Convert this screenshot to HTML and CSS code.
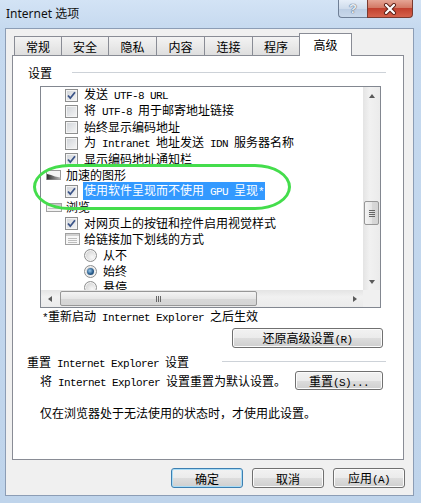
FILE: index.html
```html
<!DOCTYPE html>
<html>
<head>
    <meta charset="utf-8">
    <title>Internet 选项</title>
    <link rel="stylesheet" href="styles.css">
</head>
<body>
<div id="window">
    <div class="titlebar">
        <span class="title">Internet 选项</span>
        <div class="caption">
            <span class="cap-btn help">?</span>
            <span class="cap-btn close">
                <svg width="14" height="12" viewBox="0 0 14 12">
                    <path d="M3 2 L11 10 M11 2 L3 10" stroke="#5b1f16" stroke-width="4" stroke-linecap="round"/>
                    <path d="M3 2 L11 10 M11 2 L3 10" stroke="#fff" stroke-width="2.2" stroke-linecap="round"/>
                </svg>
            </span>
        </div>
    </div>

    <div class="client">
        <div class="tabs">
            <span class="tab">常规</span>
            <span class="tab">安全</span>
            <span class="tab w49">隐私</span>
            <span class="tab w49">内容</span>
            <span class="tab w49">连接</span>
            <span class="tab">程序</span>
            <span class="tab active">高级</span>
        </div>

        <div class="panel">
            <div class="group-title">
                <span>设置</span><i class="rule"></i>
            </div>

            <div class="listbox">
                <div class="list-view">
                    <div class="list-items">
                        <div class="row lv1"><span class="check on"><svg width="11" height="11"><path d="M2 5.5 L4.3 8.2 L9 2.3" fill="none" stroke="#3b5488" stroke-width="1.8"/></svg></span><span>发送<span class="en"> UTF-8 URL</span></span></div>
                        <div class="row lv1"><span class="check"></span><span>将<span class="en"> UTF-8 </span>用于邮寄地址链接</span></div>
                        <div class="row lv1"><span class="check"></span><span>始终显示编码地址</span></div>
                        <div class="row lv1"><span class="check"></span><span>为<span class="en"> Intranet </span>地址发送<span class="en"> IDN </span>服务器名称</span></div>
                        <div class="row lv1"><span class="check on"><svg width="11" height="11"><path d="M2 5.5 L4.3 8.2 L9 2.3" fill="none" stroke="#3b5488" stroke-width="1.8"/></svg></span><span>显示编码地址通知栏</span></div>
                        <div class="row lv0">
                            <svg class="cat-icon" width="16" height="11" viewBox="0 0 16 11">
                                <defs>
                                    <linearGradient id="gfx" x1="0" x2="1" y1="0" y2="0">
                                        <stop offset="0" stop-color="#2f2f2f"/>
                                        <stop offset="1" stop-color="#b9b9b9"/>
                                    </linearGradient>
                                </defs>
                                <rect x="0.5" y="0.5" width="14" height="9" fill="#f4f4f4" stroke="#9a9a9a"/>
                                <path d="M1 9.5 L1 4 L5 5 L9 6.5 L14.5 7.5 L14.5 9.5 Z" fill="url(#gfx)"/>
                            </svg>
                            <span>加速的图形</span>
                        </div>
                        <div class="row lv1"><span class="check on"><svg width="11" height="11"><path d="M2 5.5 L4.3 8.2 L9 2.3" fill="none" stroke="#3b5488" stroke-width="1.8"/></svg></span><span class="selected">使用软件呈现而不使用<span class="en"> GPU </span>呈现<span class="en">*</span></span></div>
                        <div class="row lv0">
                            <svg class="cat-icon" width="16" height="11" viewBox="0 0 16 11">
                                <rect x="0.5" y="1.5" width="15" height="8" fill="#f2f2f2" stroke="#a3a3a3"/>
                                <rect x="1" y="2" width="14" height="2" fill="#c9c9c9"/>
                                <path d="M2 6.5 H14" stroke="#c4c4c4"/>
                            </svg>
                            <span>浏览</span>
                        </div>
                        <div class="row lv1"><span class="check on"><svg width="11" height="11"><path d="M2 5.5 L4.3 8.2 L9 2.3" fill="none" stroke="#3b5488" stroke-width="1.8"/></svg></span><span>对网页上的按钮和控件启用视觉样式</span></div>
                        <div class="row lv1">
                            <svg class="opt-icon" width="15" height="12" viewBox="0 0 15 12">
                                <rect x="0.5" y="0.5" width="14" height="11" fill="#f7f7f7" stroke="#a0a0a0"/>
                                <rect x="1" y="1" width="13" height="2" fill="#d0d0d0"/>
                                <path d="M3 5.5 H12 M3 7.5 H12 M3 9.5 H12" stroke="#bdbdbd"/>
                            </svg>
                            <span>给链接加下划线的方式</span>
                        </div>
                        <div class="row lv2"><span class="radio"></span><span>从不</span></div>
                        <div class="row lv2"><span class="radio on"></span><span>始终</span></div>
                        <div class="row lv2"><span class="radio"></span><span>悬停</span></div>
                    </div>
                    <div class="vscroll">
                        <span class="sb-btn"><i class="arrow up"></i></span>
                        <div class="sb-track">
                            <span class="thumb-v"><i></i><i></i><i></i><i></i></span>
                        </div>
                        <span class="sb-btn"><i class="arrow down"></i></span>
                    </div>
                </div>
                <div class="hscroll">
                    <span class="sb-btn"><i class="arrow left"></i></span>
                    <div class="sb-track">
                        <span class="thumb-h"><i></i><i></i><i></i></span>
                    </div>
                    <span class="sb-btn"><i class="arrow right"></i></span>
                    <span class="corner"></span>
                </div>
            </div>

            <p class="note"><span class="en">*</span>重新启动<span class="en"> Internet Explorer </span>之后生效</p>
            <div class="restore-row">
                <button class="btn restore">还原高级设置<span class="en">(R)</span></button>
            </div>

            <div class="group-title second">
                <span>重置<span class="en"> Internet Explorer </span>设置</span><i class="rule"></i>
            </div>
            <div class="reset-row">
                <span>将<span class="en"> Internet Explorer </span>设置重置为默认设置。</span>
                <button class="btn reset">重置<span class="en">(S)...</span></button>
            </div>
            <p class="hint">仅在浏览器处于无法使用的状态时，才使用此设置。</p>

            <div class="mark"></div>
        </div>

        <div class="dialog-buttons">
            <button class="btn default">确定</button>
            <button class="btn">取消</button>
            <button class="btn">应用<span class="en">(A)</span></button>
        </div>
    </div>
</div>
</body>
</html>
```

FILE: styles.css
```css
body {
    margin: 0;
    font-family: "Noto Sans CJK SC", sans-serif;
    font-size: 12px;
    color: #000;
    background-color: #c2d6ed;
}

#window {
    width: 421px;
    height: 503px;
    display: flex;
    flex-direction: column;
    background: linear-gradient(#d3e3f5, #c5d9ef 30px, #bfd4eb);
    overflow: hidden;
}

/* title bar */

.titlebar {
    height: 28px;
    display: flex;
    align-items: flex-start;
    padding-left: 6px;
}

.title {
    line-height: 28px;
    font-family: "Noto Sans", "Noto Sans CJK SC", sans-serif;
    font-size: 12px;
    color: #111;
}

.caption {
    margin-left: auto;
    margin-right: 8px;
    display: flex;
}

.cap-btn {
    height: 18px;
    box-sizing: border-box;
    display: flex;
    align-items: center;
    justify-content: center;
    border: 1px solid #6f7f96;
    border-top: none;
}

.help {
    width: 29px;
    border-right: none;
    border-radius: 0 0 0 4px;
    background: linear-gradient(#e6eef8, #cfdcec 50%, #bccde3 51%, #c9d8ea);
    font-family: "Liberation Sans", sans-serif;
    font-size: 13px;
    font-weight: bold;
    color: #e9eef5;
    text-shadow: 0 0 1px #4b5a70, 0 0 1px #4b5a70;
}

.close {
    width: 46px;
    border-color: #7a3a30;
    border-radius: 0 0 4px 0;
    background: linear-gradient(#e5a595, #d37a66 45%, #c2412f 50%, #d5624c);
}

/* dialog face */

.client {
    flex: 1;
    margin: 0 7px 7px 5px;
    border: 1px solid #8c9db5;
    background-color: #f0f0f0;
    display: flex;
    flex-direction: column;
}

.tabs {
    display: flex;
    align-items: flex-end;
    height: 22px;
    margin-top: 4px;
    padding-left: 8px;
}

.tab {
    box-sizing: border-box;
    width: 48px;
    height: 19px;
    margin-right: -1px;
    border: 1px solid #898c95;
    border-bottom: none;
    background: linear-gradient(#f3f3f3, #e9e9e9 50%, #dedede);
    text-align: center;
    line-height: 20px;
}

.tab.w49 {
    width: 49px;
}

.tab.active {
    position: relative;
    z-index: 1;
    width: 53px;
    height: 23px;
    margin-bottom: -1px;
    background: #fff;
    line-height: 22px;
}

.panel {
    position: relative;
    box-sizing: border-box;
    height: 405px;
    margin: 0 9px 0 6px;
    padding-top: 8px;
    border: 1px solid #898c95;
    background-color: #fff;
}

.group-title {
    display: flex;
    align-items: center;
    height: 16px;
    padding: 0 17px 0 15px;
}

.group-title .rule {
    flex: 1;
    margin-left: 20px;
    border-top: 1px solid #cdd2d8;
}

.group-title.second {
    margin-top: 5px;
    padding-left: 14px;
}

.group-title.second .rule {
    margin-left: 33px;
}

.en {
    font-family: "Liberation Mono", monospace;
    font-size: 11px;
    letter-spacing: -0.6px;
}

/* settings tree */

.listbox {
    width: 341px;
    margin: 6px 0 0 27px;
    border: 1px solid #828790;
    box-sizing: border-box;
}

.list-view {
    display: flex;
    height: 203px;
}

.list-items {
    flex: 1;
    overflow: hidden;
}

.row {
    display: flex;
    align-items: center;
    height: 16px;
    line-height: 16px;
    white-space: nowrap;
}

.row.lv0 {
    padding-left: 5px;
}

.row.lv1 {
    padding-left: 24px;
}

.row.lv2 {
    padding-left: 43px;
}

.cat-icon {
    margin-right: 4px;
}

.opt-icon {
    margin-right: 4px;
}

.check {
    box-sizing: border-box;
    width: 13px;
    height: 13px;
    margin-right: 6px;
    border: 1px solid #8e8f8f;
    background: linear-gradient(135deg, #cfd3d8, #f6f6f6);
    box-shadow: inset 0 0 0 1px #f4f4f4;
    display: flex;
}

.radio {
    box-sizing: border-box;
    width: 13px;
    height: 13px;
    margin-right: 6px;
    border: 1px solid #8e8f8f;
    border-radius: 50%;
    background: radial-gradient(circle at 65% 65%, #f8f8f8, #d6d6d6 70%);
    box-shadow: inset 0 0 0 1px #f5f5f5;
    display: flex;
    align-items: center;
    justify-content: center;
}

.radio.on::after {
    content: "";
    width: 7px;
    height: 7px;
    border-radius: 50%;
    background: radial-gradient(circle at 40% 40%, #9ccbee, #2a5d8c 55%, #16395c);
}

.selected {
    background-color: #3399ff;
    color: #fff;
    padding: 0 1px;
    line-height: 15px;
    margin-left: -1px;
}

/* scroll bars */

.vscroll {
    width: 17px;
    display: flex;
    flex-direction: column;
    background: linear-gradient(90deg, #e4e4e4, #f1f1f1 40%, #ebebeb);
}

.hscroll {
    height: 17px;
    display: flex;
    background: linear-gradient(#e4e4e4, #f1f1f1 40%, #ebebeb);
}

.sb-btn {
    width: 17px;
    height: 17px;
    display: flex;
    align-items: center;
    justify-content: center;
}

.sb-track {
    flex: 1;
    display: flex;
}

.vscroll .sb-track {
    flex-direction: column;
}

.arrow {
    width: 0;
    height: 0;
    border: 3px solid transparent;
}

.arrow.up {
    border-bottom: 4px solid #5a5a5a;
    border-top: none;
}

.arrow.down {
    border-top: 4px solid #5a5a5a;
    border-bottom: none;
}

.arrow.left {
    border-right: 4px solid #5a5a5a;
    border-left: none;
}

.arrow.right {
    border-left: 4px solid #5a5a5a;
    border-right: none;
}

.thumb-v {
    box-sizing: border-box;
    width: 15px;
    height: 24px;
    margin: 97px 0 0 1px;
    border: 1px solid #979797;
    border-radius: 2px;
    background: linear-gradient(90deg, #f4f4f4, #e6e6e6 50%, #d8d8d8 51%, #d4d4d4);
    display: flex;
    flex-direction: column;
    align-items: center;
    justify-content: center;
    gap: 1px;
}

.thumb-v i {
    width: 6px;
    height: 1px;
    background-color: #666;
}

.thumb-h {
    box-sizing: border-box;
    width: 197px;
    height: 15px;
    margin: 1px 0 0 2px;
    border: 1px solid #979797;
    border-radius: 2px;
    background: linear-gradient(#f4f4f4, #e6e6e6 50%, #d8d8d8 51%, #d4d4d4);
    display: flex;
    align-items: center;
    justify-content: center;
    gap: 1px;
}

.thumb-h i {
    width: 1px;
    height: 6px;
    background-color: #666;
}

.corner {
    width: 17px;
    background-color: #f0f0f0;
}

/* lower part of the page */

.note {
    margin: 0 0 0 29px;
    line-height: 16px;
}

.restore-row {
    display: flex;
    justify-content: flex-end;
    padding-right: 20px;
    margin-top: 2px;
}

.btn {
    box-sizing: border-box;
    height: 20px;
    padding: 0;
    border: 1px solid #707070;
    border-radius: 3px;
    background: linear-gradient(#f2f2f2, #ebebeb 50%, #dddddd 51%, #cfcfcf);
    box-shadow: inset 0 0 0 1px #fbfbfb;
    font-family: "Noto Sans CJK SC", sans-serif;
    font-size: 12px;
    line-height: 17px;
    color: #000;
}

.btn.restore {
    width: 151px;
}

.reset-row {
    display: flex;
    align-items: center;
    justify-content: space-between;
    height: 20px;
    margin-top: 1px;
    padding: 0 20px 0 27px;
}

.btn.reset {
    width: 88px;
    height: 19px;
}

.hint {
    margin: 15px 0 0 27px;
    line-height: 16px;
}

/* green hand-drawn marker around the graphics option */
.mark {
    position: absolute;
    left: 20px;
    top: 108px;
    width: 258px;
    height: 46px;
    box-sizing: border-box;
    border: 3px solid #44dd4c;
    border-radius: 36px / 23px;
}

.dialog-buttons {
    display: flex;
    justify-content: flex-end;
    gap: 9px;
    margin-top: 8px;
    padding-right: 8px;
}

.dialog-buttons .btn {
    width: 72px;
}

.btn.default {
    border-color: #3c7fb1;
    box-shadow: inset 0 0 0 1px #a9dcf6;
}
```
